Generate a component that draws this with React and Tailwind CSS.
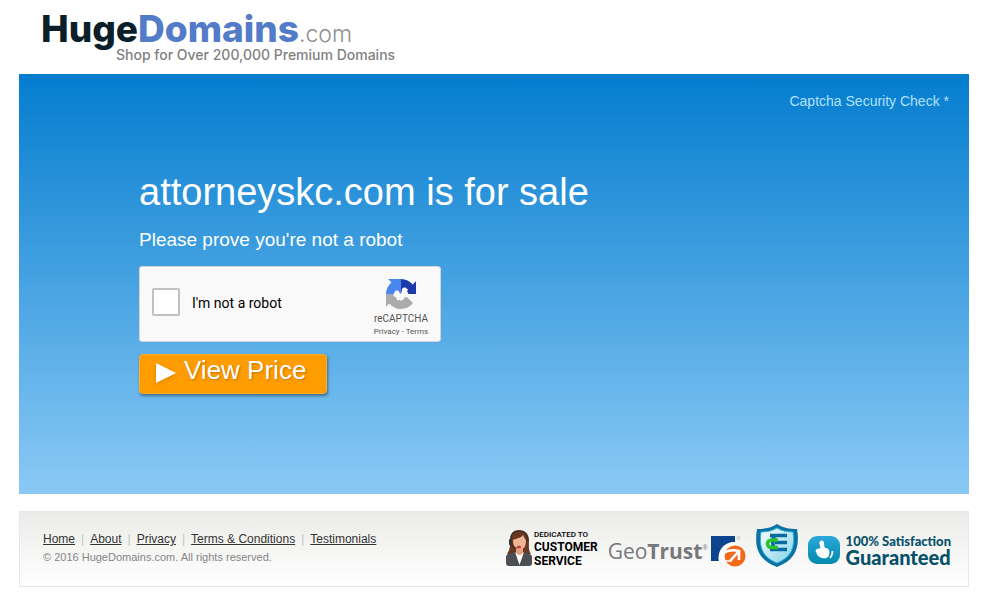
const LINKS = ['Home', 'About', 'Privacy', 'Terms & Conditions', 'Testimonials']

function Logo() {
  return (
    <a href="#" className="inline-block pl-[22px] pt-[14px] font-['Inter',sans-serif]">
      <div className="flex items-baseline leading-[30px]">
        <span className="text-[37px] font-extrabold text-[#0b1f2b]">Huge</span>
        <span className="text-[37px] font-extrabold text-[#527bc8]">Domains</span>
        <span className="text-[23px] leading-5 font-light text-[#8f8f8f]">.com</span>
      </div>
      <p className="pl-[75px] pt-[2px] text-[14px] leading-[18px] font-medium text-[#808080]">
        Shop for Over 200,000 Premium Domains
      </p>
    </a>
  )
}

function RecaptchaMark() {
  return (
    <svg viewBox="0 0 64 64" className="h-[30px] w-[30px]" aria-hidden="true">
      <path fill="#1c3aa9" d="M64 32V4.700l-7.200 7.100C51 4.700 42 0 32 0v32z" />
      <path fill="#4a86f0" d="M32 0H4.600l7.200 7.300C4.600 13 0 22 0 32h32z" />
      <path fill="#ababab" d="M0 32v27.300l7.200-7.100C13 59.400 22 64 32 64c10.400 0 19.600-5 25.500-12.700L45 39l-4-7z" />
      <path fill="#f9f9f9" d="M32 32l2-9c1-6 8-6 10-2l3 1-2 4 3 6h-3c3 2 1 7-3 7l-3 1c-1 5-7 8-10 4-3 3-8 0-7-5-6 0-8-7-4-9 0-6 8-7 10-2z" />
    </svg>
  )
}

function Captcha() {
  return (
    <div className="mt-[15px] flex h-[76px] w-[302px] items-center rounded-[3px] border border-[#d3d3d3] bg-[#f9f9f9] pl-3 font-['Roboto',sans-serif]">
      <input
        id="robot"
        type="checkbox"
        className="mb-1 h-7 w-7 appearance-none rounded-[2px] border-2 border-[#c1c1c1] bg-white"
      />
      <label htmlFor="robot" className="mb-[2px] ml-3 flex-1 text-[14px] text-black">I'm not a robot</label>
      <div className="flex w-[78px] flex-col items-center pt-2 text-[#555]">
        <RecaptchaMark />
        <span className="mt-1 text-[10px] leading-3">reCAPTCHA</span>
        <span className="mt-[2px] text-[8px] leading-[10px]">
          <a href="#">Privacy</a> - <a href="#">Terms</a>
        </span>
      </div>
    </div>
  )
}

function CustomerService() {
  return (
    <div className="mt-1 flex items-center gap-[2px]">
      <svg viewBox="0 0 26 38" className="h-[38px] w-[26px]" aria-hidden="true">
        <path fill="#693820" d="M13 1C7 1 4 5 4 11c0 6 0 10-3 14h24c-3-4-2-8-2-14 0-6-4-10-10-10z" />
        <path fill="#f0b595" d="M7 11c2-1 8-2 10-5 1 3 3 4 3 6 0 6-3 9-6.500 9S7 17 7 11z" />
        <path fill="#e3a181" d="M10 19h7v7h-7z" />
        <path fill="#4b4f54" d="M0 34V28c0-3 3-3 9-5l4.500 8L18 23c5 2 8 2 8 5v6c0 2-1 3-3 3H3c-2 0-3-1-3-3z" />
        <path fill="#fff" d="M9 23l4.500 13L18 23l-4.500 4z" />
        <path fill="none" stroke="#3a2a25" strokeWidth="1.200" d="M5 12C4 5 8 2 13 2s9 3 8 10M5 14c0 3 3 5 6 5" />
        <rect x="3" y="10" width="3" height="6" rx="1" fill="#333" />
        <ellipse cx="13" cy="18" rx="2" ry="1.200" fill="#c7352a" />
      </svg>
      <div className="font-['Roboto',sans-serif] text-black">
        <p className="text-[8px] leading-[11px] font-medium">DEDICATED TO</p>
        <p className="text-[12px] leading-[14px] font-bold">CUSTOMER<br />SERVICE</p>
      </div>
    </div>
  )
}

function GeoTrust() {
  return (
    <div className="mt-[10px] flex items-center">
      <p className="font-['Open_Sans',sans-serif] text-[21px] leading-6 text-[#77787a]">
        Geo<b>Trust</b>
      </p>
      <span className="mb-2 mr-[2px] text-[7px] leading-none text-[#77787a]">®</span>
      <svg viewBox="0 0 36 32" className="h-8 w-9" aria-hidden="true">
        <path fill="#0c4490" d="M1 1h24v7C15 8 8 15 9 26H1z" />
        <path fill="#fff" d="M9 27C7 15 14 7 25 7v4C17 12 12 18 13 27z" />
        <circle cx="25" cy="21" r="10.500" fill="#f26a1b" />
        <path fill="none" stroke="#fff" strokeWidth="2.600" d="M12 23c0-7 9-9 17-7v9M29 16l-9 10" />
        <path fill="none" stroke="#fff" strokeWidth="1.500" d="M14 26h8" />
        <circle cx="28.500" cy="3" r="1.500" fill="none" stroke="#aaa" strokeWidth=".6" />
      </svg>
    </div>
  )
}

function Shield() {
  return (
    <svg viewBox="0 0 42 44" className="h-11 w-[42px]" aria-hidden="true">
      <defs>
        <linearGradient id="shield" x2="1" y2="1">
          <stop stopColor="#fff" />
          <stop offset="1" stopColor="#7fd0ea" />
        </linearGradient>
      </defs>
      <path fill="#0872a4" d="M21 0c6 4 12 5 20 5 3 18-1 31-20 38C2 36-2 23 1 5c8 0 14-1 20-5z" />
      <path fill="url(#shield)" stroke="#35b3dc" d="M21 4c5 3 10 4 16 4 2 15-1 25-16 31C6 33 3 23 5 8c6 0 11-1 16-4z" />
      <path fill="none" stroke="#086ba0" strokeWidth="3.600" d="M14 11.500h17M19 18.500h12M14 25.500h17M19 11c-3 4-3 11 0 15" />
      <path fill="none" stroke="#2cc22c" strokeWidth="3.600" d="M22 16h-6c-6 0-6 7.500 0 7.500h6" />
    </svg>
  )
}

function Satisfaction() {
  return (
    <div className="mt-2 flex items-center gap-[6px]">
      <svg viewBox="0 0 32 28" className="h-7 w-8" aria-hidden="true">
        <defs>
          <linearGradient id="thumb" x2="0" y2="1">
            <stop stopColor="#29a9da" />
            <stop offset="1" stopColor="#0389ae" />
          </linearGradient>
        </defs>
        <rect width="32" height="28" rx="9" fill="url(#thumb)" />
        <path fill="#fff" d="M12.500 5c2-1 3.500 0 3.500 2.500l.5 4 3 1c2 1 2.500 5 1 8-2 2.500-6 2-9 .5-2-1-3-3-3-4.500-1.500-1-1-3 .5-3.500l3.500-1-1-4c-.4-1.500 0-2.600 1-3z" />
        <path fill="none" stroke="#fff" strokeWidth="1.600" d="M24.500 15c0 3-.5 5-2.500 7" />
      </svg>
      <div className="font-['Lato',sans-serif] font-black text-[#07506a]">
        <p className="text-[13px] leading-[13px]">100% Satisfaction</p>
        <p className="text-[20px] leading-[18px]">Guaranteed</p>
      </div>
    </div>
  )
}

export default function App() {
  return (
    <div className="bg-white px-[19px] pb-6 font-['Liberation_Sans',Arial,sans-serif]">
      <header className="h-[74px]">
        <Logo />
      </header>

      <main className="min-h-[420px] bg-linear-to-b/srgb from-[#047dcf] to-[#8ac9f5] px-5 pt-[18px] text-white">
        <p className="text-right text-[14px] leading-[18px] text-[#b3e0fb]">Captcha Security Check *</p>
        <div className="pl-[100px] pt-[60px]">
          <h1 className="text-[38px] leading-[44px]">attorneyskc.com is for sale</h1>
          <p className="mt-[15px] text-[19px] leading-[22px]">Please prove you're not a robot</p>
          <Captcha />
          <button
            type="button"
            className="mt-3 flex h-10 w-[188px] items-center gap-2 rounded-[4px] border border-[#ffab2e] bg-[#ff9c00] pl-4 text-[26px] leading-none shadow-[1px_2px_3px_rgba(0,0,0,0.4)] [text-shadow:1px_1px_2px_rgba(0,0,0,0.25)]"
          >
            <svg viewBox="0 0 20 20" className="mb-[2px] h-5 w-5 drop-shadow-sm" aria-hidden="true">
              <path fill="#fff" d="M0 0l20 10L0 20z" />
            </svg>
            <span className="pb-2">View Price</span>
          </button>
        </div>
      </main>

      <footer className="mt-[17px] flex h-[76px] items-start justify-between border border-[#e6e6e6] bg-linear-to-b from-[#ebebe9] to-white pl-[23px] pr-[17px]">
        <div className="pt-5">
          <nav className="flex text-[12px] leading-[14px] text-[#333]">
            {LINKS.map((label, i) => (
              <span key={label}>
                {i > 0 && <span className="px-[6px] text-[#bcc8bf]">|</span>}
                <a href="#" className="underline">{label}</a>
              </span>
            ))}
          </nav>
          <p className="mt-1 text-[11px] leading-[14px] text-[#858585]">© 2016 HugeDomains.com. All rights reserved.</p>
        </div>
        <div className="flex items-center gap-[10px] pt-3">
          <CustomerService />
          <GeoTrust />
          <Shield />
          <Satisfaction />
        </div>
      </footer>
    </div>
  )
}
